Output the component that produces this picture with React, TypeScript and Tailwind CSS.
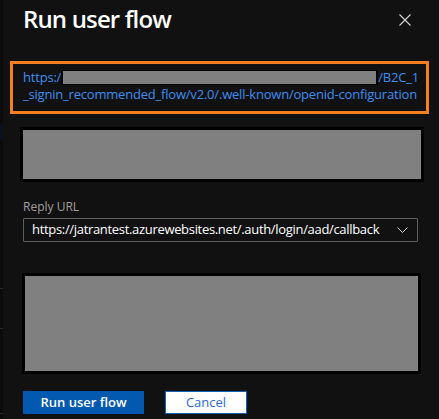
import React from "react";

export default function App() {
  const font = { fontFamily: '"Open Sans", "Noto Sans", sans-serif' };
  return (
    <div className="w-[439px] h-[419px] bg-[#111111] flex overflow-hidden" style={font}>
      <div className="w-[3px] h-full bg-[#0b0b0b] flex flex-col">
        <div className="h-[124px]" />
        <div className="h-[16px] bg-[#0a1220]" />
        <div className="h-[148px]" />
        <div className="h-px bg-[#2a2a2a]" />
        <div className="h-[39px]" />
        <div className="h-px bg-[#2a2a2a]" />
        <div className="h-[84px]" />
        <div className="h-px bg-[#2a2a2a]" />
      </div>
      <div className="flex-1 flex flex-col">
        <div className="pt-[3px] flex items-start">
          <h1 className="ml-[20px] h-[32px] leading-[32px] text-[24px] font-semibold text-white tracking-[-0.85px]">
            Run user flow
          </h1>
          <div className="ml-auto mr-[28px] mt-[11px]">
            <svg width="12" height="12" viewBox="0 0 12 12" fill="none">
              <path d="M0.5 0.5L11.5 11.5M11.5 0.5L0.5 11.5" stroke="#d6d6d6" strokeWidth="1.1" />
            </svg>
          </div>
        </div>

        <div className="mt-[26px] ml-[7px] w-[419px] border-[3px] border-[#f6801f] pl-[10px] pt-[5px] pb-[8px] text-[13px] leading-[17px] text-[#3d8ef0] tracking-[-0.2px]">
          <div className="whitespace-nowrap">
            https:/
            <span className="inline-block align-[-3px] w-[317px] h-[15px] bg-black px-[2px] py-px">
              <span className="block w-full h-full bg-[#808080]" />
            </span>
            /B2C_1
          </div>
          <div className="whitespace-nowrap">_signin_recommended_flow/v2.0/.well-known/openid-configuration</div>
        </div>

        <div className="mt-[13px] ml-[17px] w-[404px] h-[55px] bg-black p-[3px]">
          <div className="w-full h-full bg-[#808080]" />
        </div>

        <div className="mt-[17px] ml-[20px] text-[12px] leading-[16px] text-[#a19f9d]">Reply URL</div>

        <div className="mt-[3px] ml-[20px] w-[395px] h-[24px] border border-[#5e5e5e] rounded-[1px] flex items-center pl-[8px] pr-[9px]">
          <span className="text-[13px] text-white tracking-[-0.32px] whitespace-nowrap">
            https://jatrantest.azurewebsites.net/.auth/login/aad/callback
          </span>
          <svg className="ml-auto" width="11" height="6" viewBox="0 0 11 6" fill="none">
            <path d="M0.5 0.5L5.5 5.5L10.5 0.5" stroke="#d6d6d6" strokeWidth="1" />
          </svg>
        </div>

        <div className="mt-[31px] ml-[19px] w-[399px] h-[101px] bg-black p-[3px]">
          <div className="w-full h-full bg-[#808080]" />
        </div>

        <div className="mt-[17px] ml-[20px] flex gap-[21px]">
          <button className="w-[121px] h-[23px] bg-[#0358b0] text-white text-[13px] font-semibold flex items-center justify-center">
            Run user flow
          </button>
          <button className="w-[82px] h-[23px] bg-white border border-[#1160b8] text-[#2f68d6] text-[13px] flex items-center justify-center">
            Cancel
          </button>
        </div>
      </div>
    </div>
  );
}
